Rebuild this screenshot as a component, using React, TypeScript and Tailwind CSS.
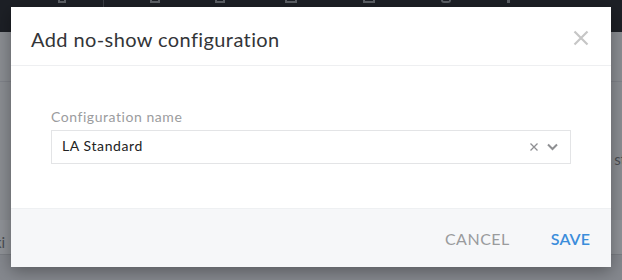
import React from "react";

export default function App() {
  return (
    <div
      className="relative w-[622px] h-[280px] overflow-hidden bg-[#8b8e93]"
      style={{ fontFamily: "Lato, 'Open Sans', sans-serif" }}
    >
      {/* background page */}
      <div className="flex flex-col h-full">
        <div className="relative h-[32px] bg-[#1d2026] flex items-start">
          <div className="flex items-start pt-0 gap-0">
            <div className="ml-[58px] w-[8px] h-[3px] border-x-2 border-b-2 border-[#5c6066]" />
            <div className="ml-[37px] w-px h-[32px] bg-[#3a3e45]" />
            <div className="ml-[46px] w-[10px] h-[3px] border-x-2 border-b-2 border-[#5c6066]" />
            <div className="ml-[55px] w-[10px] h-[3px] border-x-2 border-b-2 border-[#5c6066]" />
            <div className="ml-[60px] w-[12px] h-[3px] border-x-2 border-b-2 border-[#5c6066]" />
            <div className="ml-[66px] w-[12px] h-[3px] border-x-2 border-b-2 border-[#5c6066]" />
            <div className="ml-[66px] w-[10px] h-[3px] rounded-b-full border-x-2 border-b-2 border-[#5c6066]" />
            <div className="ml-[56px] w-[3px] h-[3px] bg-[#5c6066]" />
          </div>
        </div>
        <div className="h-[50px] border-b border-[#80838a]" />
        <div className="h-[138px] flex justify-end">
          <span className="text-[15px] text-[#4b4e54] mt-[66px] mr-[-4px]">st</span>
        </div>
        <div className="h-[35px] bg-[#909398] flex items-center border-b border-[#7b7e84]">
          <span className="text-[15px] text-[#4b4e54] ml-[-6px] mt-[10px]">ki</span>
        </div>
        <div className="flex-1 bg-[#85888e]" />
      </div>

      {/* modal */}
      <div className="absolute left-[11px] top-[7px] w-[600px] h-[260px] bg-white shadow-[0_4px_16px_rgba(0,0,0,0.35)] flex flex-col">
        <div className="h-[59px] flex items-center justify-between pl-[20px] pr-[22px] pt-[6px] border-b border-[#eeeff1]">
          <h2 className="text-[20px] text-[#333538] tracking-[0.4px]">Add no-show configuration</h2>
          <svg width="16" height="16" viewBox="0 0 16 16" className="mt-[-2px]">
            <path d="M1.5 1.5 L14.5 14.5 M14.5 1.5 L1.5 14.5" stroke="#c6c6c6" strokeWidth="2.2" />
          </svg>
        </div>
        <div className="flex-1 px-[40px] pt-[42px]">
          <div className="text-[14px] text-[#9b9c9e] leading-[18px] mb-[4px] tracking-[0.55px]">Configuration name</div>
          <div className="h-[34px] w-[520px] border border-[#e3e4e6] flex items-center pl-[10px] pr-[12px]">
            <span className="text-[14px] text-[#222] flex-1 tracking-[0.6px] mt-[-3px]">LA Standard</span>
            <svg width="10" height="10" viewBox="0 0 10 10" className="mr-[8px]">
              <path d="M1.5 1.5 L8.5 8.5 M8.5 1.5 L1.5 8.5" stroke="#8e8f92" strokeWidth="1.3" />
            </svg>
            <svg width="11" height="8" viewBox="0 0 11 8">
              <path d="M1 1.5 L5.5 6 L10 1.5" stroke="#8e8f92" strokeWidth="2" fill="none" />
            </svg>
          </div>
        </div>
        <div className="h-[59px] bg-[#f6f7f9] border-t border-[#eef0f2] flex items-center justify-end pr-[21px] gap-[41px] pt-[2px]">
          <button className="text-[16px] text-[#9a9b9d] tracking-[0.5px]">CANCEL</button>
          <button className="text-[16px] text-[#3b8ddb] font-semibold tracking-[0.1px]">SAVE</button>
        </div>
      </div>
    </div>
  );
}
